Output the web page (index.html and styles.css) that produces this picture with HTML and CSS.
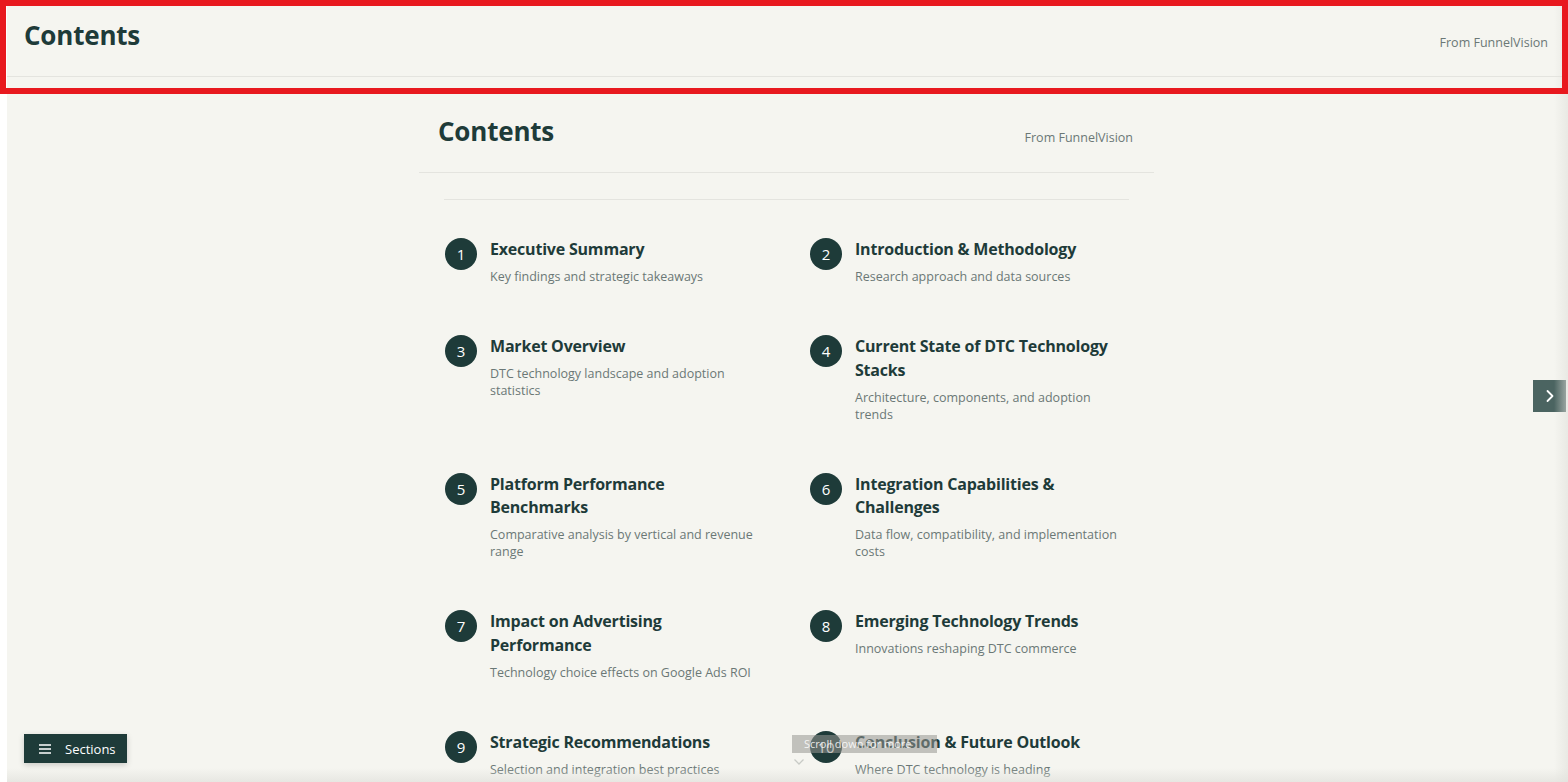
FILE: index.html
```html
<!DOCTYPE html>
<html lang="en">
<head>
<meta charset="utf-8">
<title>Contents</title>
<link rel="stylesheet" href="styles.css">
</head>
<body>
<div class="app">
  <header class="topbar">
    <h1 class="topbar-title">Contents</h1>
    <span class="topbar-source">From FunnelVision</span>
  </header>

  <main class="main">
    <section class="panel">
      <div class="panel-head">
        <h2 class="panel-title">Contents</h2>
        <span class="panel-source">From FunnelVision</span>
      </div>
      <div class="toc">
        <div class="toc-grid">
          <div class="toc-item"><span class="num">1</span><div class="toc-text"><h3>Executive Summary</h3><p>Key findings and strategic takeaways</p></div></div>
          <div class="toc-item"><span class="num">2</span><div class="toc-text"><h3>Introduction &amp; Methodology</h3><p>Research approach and data sources</p></div></div>
          <div class="toc-item"><span class="num">3</span><div class="toc-text"><h3>Market Overview</h3><p>DTC technology landscape and adoption statistics</p></div></div>
          <div class="toc-item"><span class="num">4</span><div class="toc-text"><h3>Current State of DTC Technology Stacks</h3><p>Architecture, components, and adoption trends</p></div></div>
          <div class="toc-item"><span class="num">5</span><div class="toc-text"><h3>Platform Performance Benchmarks</h3><p>Comparative analysis by vertical and revenue range</p></div></div>
          <div class="toc-item"><span class="num">6</span><div class="toc-text"><h3>Integration Capabilities &amp; Challenges</h3><p>Data flow, compatibility, and implementation costs</p></div></div>
          <div class="toc-item"><span class="num">7</span><div class="toc-text"><h3>Impact on Advertising Performance</h3><p>Technology choice effects on Google Ads ROI</p></div></div>
          <div class="toc-item"><span class="num">8</span><div class="toc-text"><h3>Emerging Technology Trends</h3><p>Innovations reshaping DTC commerce</p></div></div>
          <div class="toc-item"><span class="num">9</span><div class="toc-text"><h3>Strategic Recommendations</h3><p>Selection and integration best practices</p></div></div>
          <div class="toc-item"><span class="num">10</span><div class="toc-text"><h3>Conclusion &amp; Future Outlook</h3><p>Where DTC technology is heading</p></div></div>
        </div>
      </div>
    </section>
  </main>

  <button class="next-btn" aria-label="Next">
    <svg width="12" height="14" viewBox="0 0 12 14"><path d="M3.5 2 L8.5 7 L3.5 12" fill="none" stroke="#fff" stroke-width="1.8" stroke-linecap="round" stroke-linejoin="round"/></svg>
  </button>

  <button class="sections-btn">
    <svg width="12" height="10" viewBox="0 0 12 10"><path d="M0 1h12M0 5h12M0 9h12" stroke="#fff" stroke-width="1.5"/></svg>
    <span>Sections</span>
  </button>

  <div class="scroll-hint">
    <span class="scroll-label">Scroll down for more</span>
    <svg class="scroll-chev" width="12" height="8" viewBox="0 0 12 8"><path d="M1.5 1.5 L6 6 L10.5 1.5" fill="none" stroke="#c8cbc6" stroke-width="1.3"/></svg>
  </div>

  <div class="fade-right"></div>
  <div class="fade-bottom"></div>
</div>
<div class="highlight"></div>
</body>
</html>
```

FILE: styles.css
```css
* { box-sizing: border-box; }

html, body {
  margin: 0;
  padding: 0;
  width: 1568px;
  height: 782px;
  overflow: hidden;
  background: #ffffff;
  font-family: "Open Sans", "Liberation Sans", sans-serif;
}

.app {
  position: relative;
  margin-left: 7px;
  height: 782px;
  background: #f5f5f0;
  overflow: hidden;
}

.topbar {
  display: flex;
  justify-content: space-between;
  align-items: flex-start;
  height: 77px;
  padding: 0 20px 0 17px;
  border-bottom: 1px solid #e4e4df;
}

.topbar-title {
  margin-top: 18px;
}

.topbar-source {
  margin-top: 34px;
  line-height: 18px;
}

.topbar-title,
.panel-title {
  margin-bottom: 0;
  font-size: 26px;
  line-height: 34px;
  font-weight: 700;
  color: #1e3b39;
  letter-spacing: -0.2px;
}

.panel-title {
  margin-top: 0;
}

.topbar-source,
.panel-source {
  font-size: 12.5px;
  color: #6b7876;
}

.main {
  display: flex;
  justify-content: center;
}

.panel {
  width: 735px;
  margin-right: 2px;
}

.panel-head {
  display: flex;
  justify-content: space-between;
  align-items: baseline;
  padding: 37px 21px 24px 19px;
  border-bottom: 1px solid #e4e4df;
}

.panel-source {
  position: relative;
  top: 1px;
}

.toc {
  margin: 26px 25px 0 25px;
  border-top: 1px solid #e4e4df;
  padding-top: 38px;
}

.toc-grid {
  display: grid;
  grid-template-columns: 318px 318px;
  column-gap: 47px;
  row-gap: 50px;
  padding-left: 1px;
}

.toc-item {
  display: flex;
  gap: 13px;
  align-items: flex-start;
}

.num {
  flex: 0 0 32px;
  width: 32px;
  height: 32px;
  border-radius: 50%;
  background: #1e3b39;
  color: #fff;
  display: flex;
  align-items: center;
  justify-content: center;
  font-size: 15px;
  font-weight: 500;
}

.toc-text h3 {
  margin: 0;
  font-size: 16px;
  line-height: 23.5px;
  font-weight: 700;
  color: #1e3b39;
  letter-spacing: -0.2px;
}

.toc-text p {
  margin: 6.5px 0 0 0;
  font-size: 12.5px;
  line-height: 17px;
  color: #6b7876;
}

.next-btn {
  position: absolute;
  top: 380px;
  right: 2px;
  width: 33px;
  height: 32px;
  border: none;
  background: #4b6461;
  display: flex;
  align-items: center;
  justify-content: center;
  padding: 0;
}

.sections-btn {
  position: absolute;
  left: 17px;
  top: 734px;
  width: 103px;
  height: 29px;
  border: none;
  background: #1e3b39;
  color: #fff;
  display: flex;
  align-items: center;
  gap: 14px;
  padding: 0 0 0 15px;
  font-family: "Open Sans", "Liberation Sans", sans-serif;
  font-size: 13px;
  box-shadow: 0 2px 6px rgba(0, 0, 0, 0.18);
}

.scroll-hint {
  position: absolute;
  left: 785px;
  top: 735px;
  display: flex;
  flex-direction: column;
  align-items: flex-start;
}

.scroll-label {
  display: block;
  width: 145px;
  height: 18px;
  line-height: 18px;
  padding-left: 12px;
  background: rgba(150, 150, 145, 0.55);
  color: rgba(255, 255, 255, 0.85);
  font-size: 11px;
}

.scroll-chev {
  margin: 5px 0 0 1px;
}

.fade-right {
  position: absolute;
  top: 0;
  right: 0;
  width: 14px;
  height: 782px;
  background: linear-gradient(to right, rgba(230, 230, 225, 0), rgba(225, 225, 220, 0.6));
  pointer-events: none;
}

.fade-bottom {
  position: absolute;
  left: 0;
  bottom: 0;
  width: 100%;
  height: 14px;
  background: linear-gradient(to bottom, rgba(230, 230, 225, 0), rgba(225, 225, 220, 0.7));
  pointer-events: none;
}

.highlight {
  position: absolute;
  left: 0;
  top: 0;
  width: 1568px;
  height: 94px;
  border: 6px solid #e8191f;
  pointer-events: none;
}
```
